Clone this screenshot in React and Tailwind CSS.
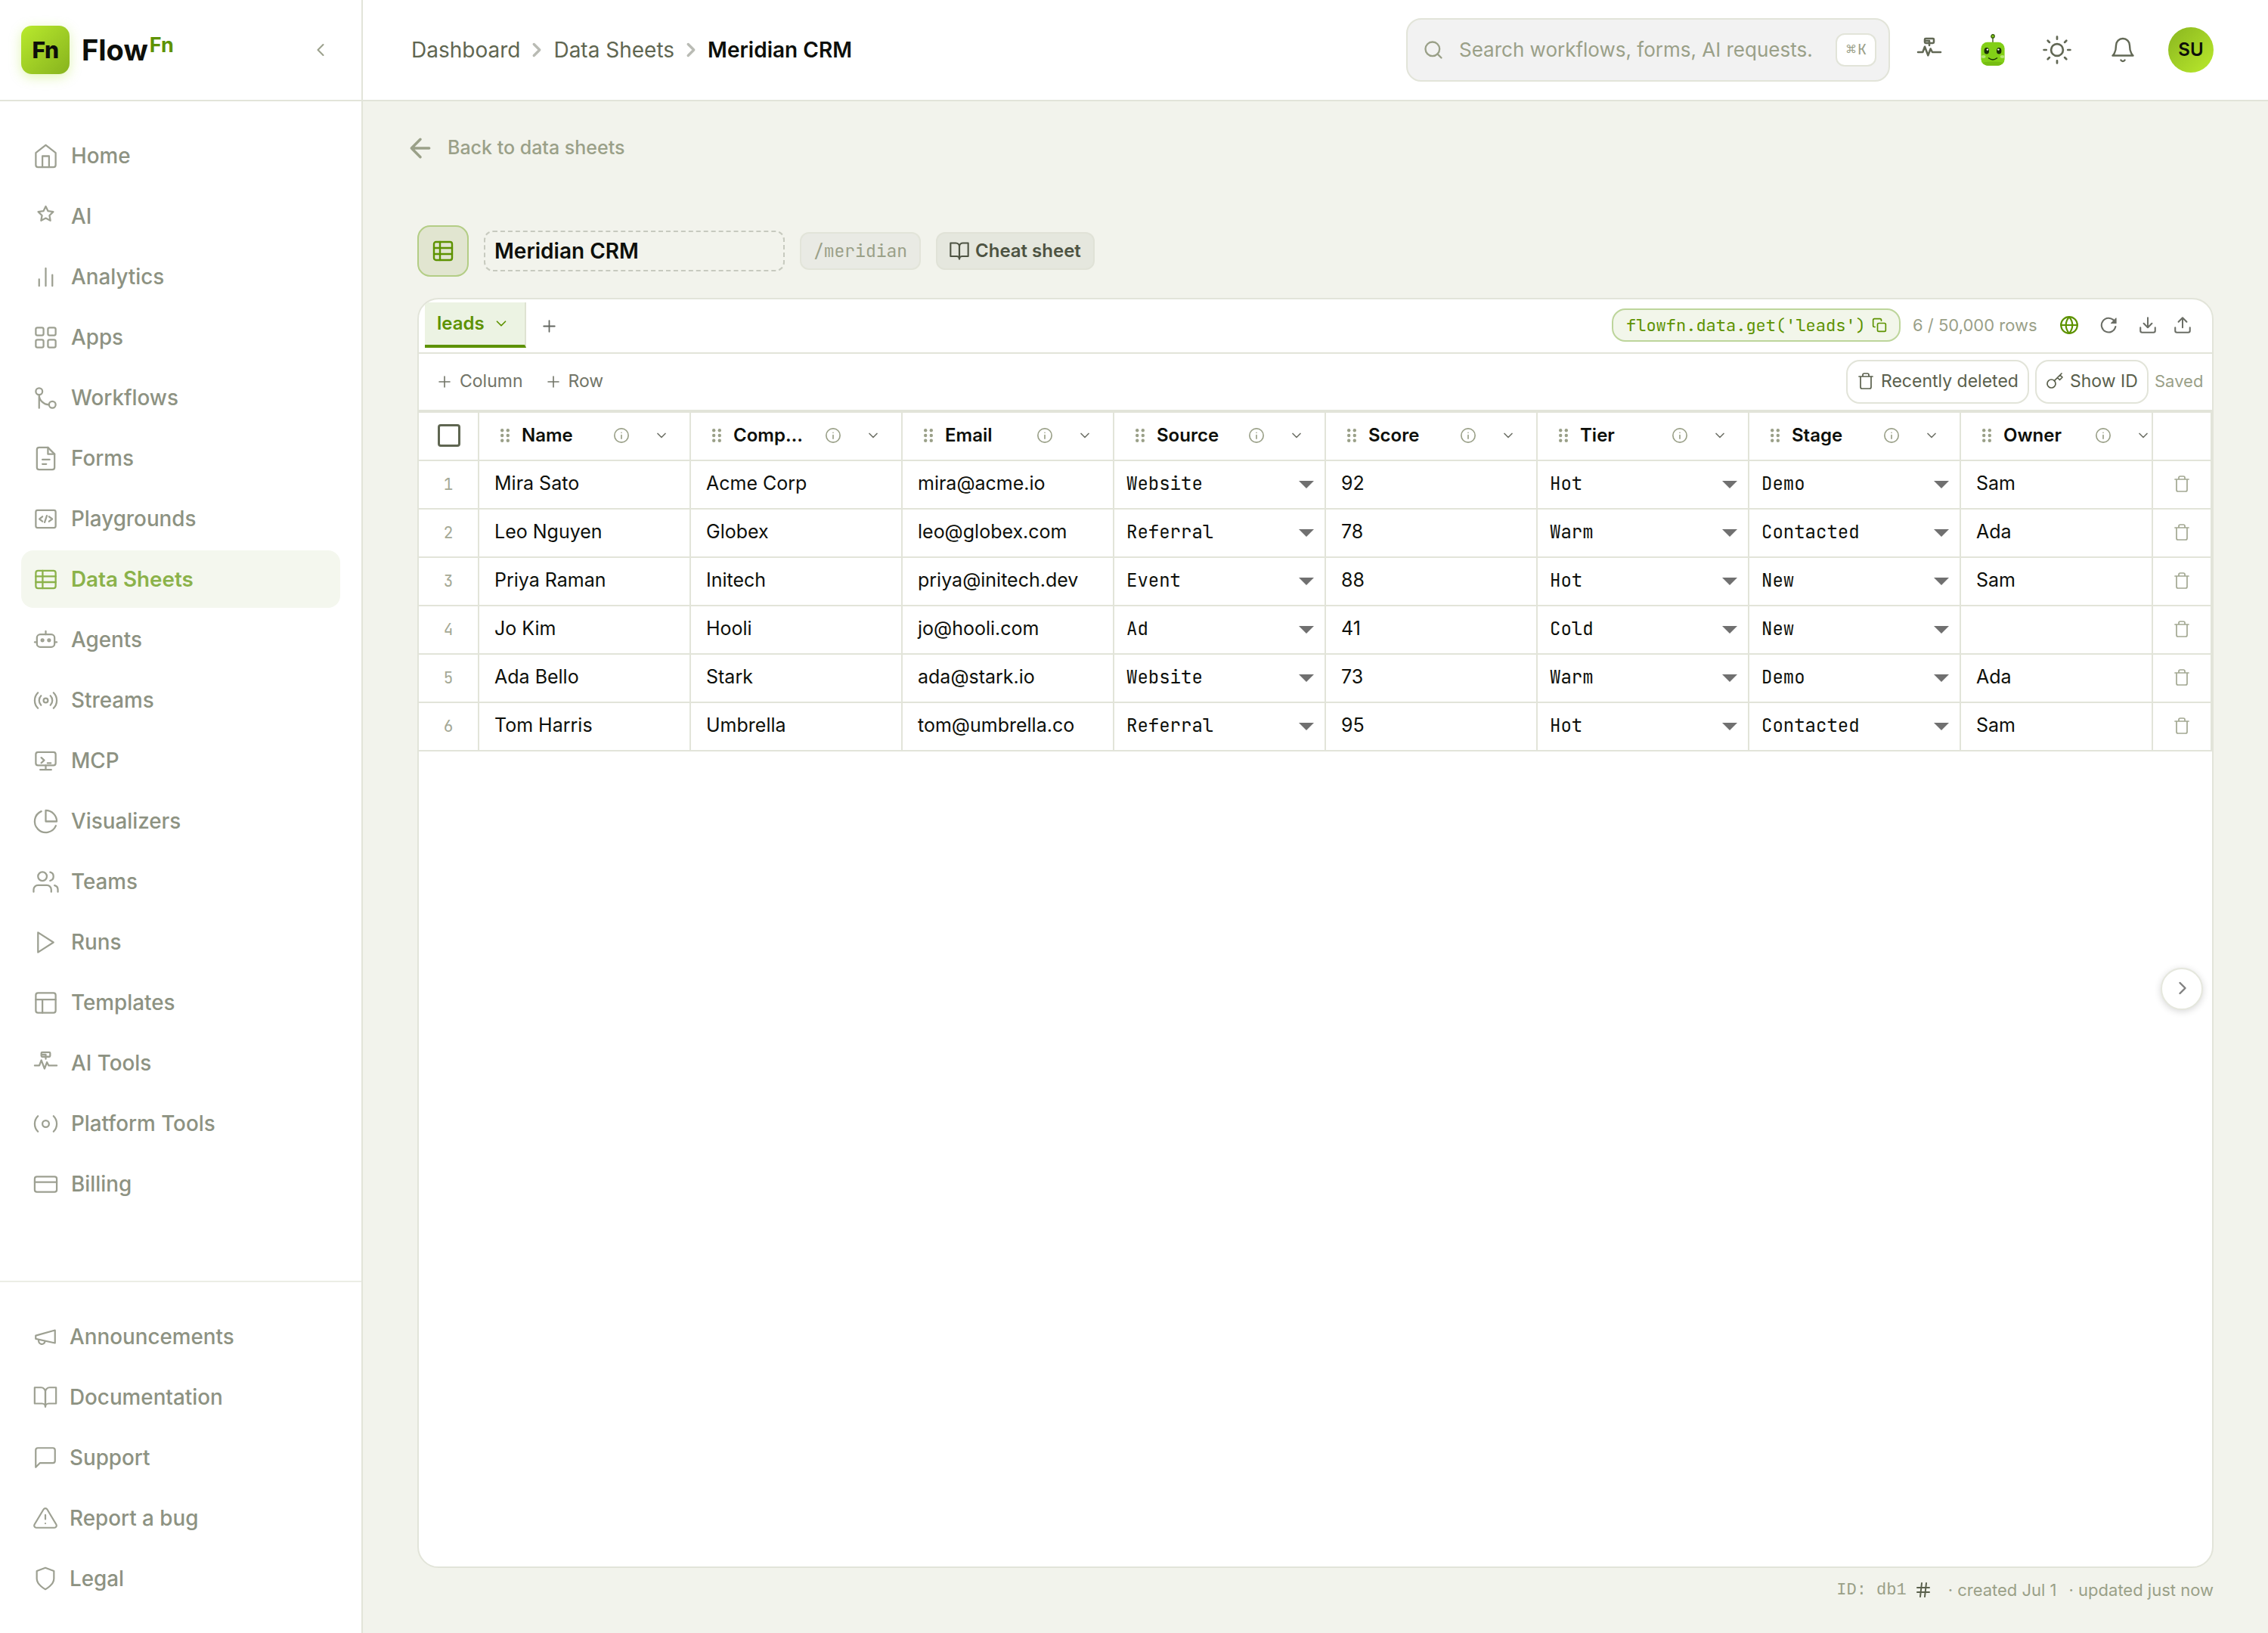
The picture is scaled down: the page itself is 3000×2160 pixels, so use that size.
import React from "react";

/* ---------- icons ---------- */

function Icon({ size = 24, sw = 1.5, className = "", children }) {
  return (
    <svg
      width={size}
      height={size}
      viewBox="0 0 24 24"
      fill="none"
      stroke="currentColor"
      strokeWidth={sw}
      strokeLinecap="round"
      strokeLinejoin="round"
      className={"shrink-0 " + className}
    >
      {children}
    </svg>
  );
}

const g = {
  home: (
    <>
      <path d="M3 9l9-7 9 7v11a2 2 0 0 1-2 2H5a2 2 0 0 1-2-2z" />
      <path d="M9 22V12h6v10" />
    </>
  ),
  ai: (
    <path
      transform="translate(3.84 1.34) scale(0.68)"
      strokeWidth="2.3"
      d="M12 2l3.09 6.26L22 9.27l-5 4.87 1.18 6.88L12 17.77l-6.18 3.25L7 14.14 2 9.27l6.91-1.01z"
    />
  ),
  analytics: <path d="M18 20V10M12 20V4M6 20v-6" />,
  apps: (
    <>
      <rect x="3" y="3" width="7" height="7" rx="1.5" />
      <rect x="14" y="3" width="7" height="7" rx="1.5" />
      <rect x="3" y="14" width="7" height="7" rx="1.5" />
      <rect x="14" y="14" width="7" height="7" rx="1.5" />
    </>
  ),
  workflows: (
    <>
      <circle cx="18" cy="18" r="3" />
      <circle cx="6" cy="6" r="3" />
      <path d="M6 21V9a9 9 0 0 0 9 9" />
    </>
  ),
  forms: (
    <>
      <path d="M14 2H6a2 2 0 0 0-2 2v16a2 2 0 0 0 2 2h12a2 2 0 0 0 2-2V8z" />
      <path d="M14 2v6h6M9 13h6.5M9 17h3.5" />
    </>
  ),
  playgrounds: (
    <>
      <rect x="3" y="4" width="18" height="16" rx="1.6" />
      <path d="M9 9.8L6.3 12 9 14.2M15 9.8l2.9 2.2-2.9 2.2M13 9l-2 6" />
    </>
  ),
  sheets: (
    <>
      <rect x="3" y="4" width="18" height="16" rx="2" />
      <path d="M3 9.2h18M3 14.4h18M9.2 4v16" />
    </>
  ),
  table: (
    <>
      <rect x="3" y="3" width="18" height="18" rx="2" />
      <path d="M3 9h18M3 15h18M9 3v18" />
    </>
  ),
  agents: (
    <>
      <rect x="4" y="7" width="16" height="11.4" rx="3" />
      <circle cx="9" cy="12.2" r="1" />
      <circle cx="15" cy="12.2" r="1" />
      <path d="M12 4v3M2 14h2M20 14h2" />
    </>
  ),
  streams: (
    <>
      <circle cx="12" cy="12" r="2" />
      <path d="M16.24 7.76a6 6 0 0 1 0 8.49m-8.48-.01a6 6 0 0 1 0-8.49m11.31-2.82a10 10 0 0 1 0 14.14m-14.14 0a10 10 0 0 1 0-14.14" />
    </>
  ),
  mcp: (
    <>
      <rect x="3" y="4" width="18" height="12" rx="2" />
      <path d="M12 16v4M7 20h10M8 9l2.6 2.4L8 13.8M13.6 14h3" />
    </>
  ),
  visualizers: (
    <>
      <path d="M21.21 15.89A10 10 0 1 1 8 2.83" />
      <path d="M22 12A10 10 0 0 0 12 2v10z" />
    </>
  ),
  teams: (
    <>
      <path d="M17 21v-2a4 4 0 0 0-4-4H5a4 4 0 0 0-4 4v2" />
      <circle cx="9" cy="7" r="4" />
      <path d="M23 21v-2a4 4 0 0 0-3-3.87M16 3.13a4 4 0 0 1 0 7.75" />
    </>
  ),
  runs: <path d="M5 3l14 9-14 9z" />,
  templates: (
    <>
      <rect x="3" y="3" width="18" height="18" rx="2" />
      <path d="M3 9h18M9 21V9" />
    </>
  ),
  aitools: (
    <>
      <rect x="8" y="2" width="8" height="4" rx="0.8" />
      <path d="M8.3 4H12M12 4v4M2 14h4.2L8 9.2l2.9 7.6L13.1 11l1.6 3H22" />
    </>
  ),
  platform: (
    <>
      <circle cx="12" cy="12" r="3" />
      <path d="M19.07 4.93a10 10 0 0 1 0 14.14m-14.14 0a10 10 0 0 1 0-14.14" />
    </>
  ),
  billing: (
    <>
      <rect x="2" y="5" width="20" height="14" rx="2" />
      <path d="M2 10h20" />
    </>
  ),
  megaphone: (
    <>
      <path d="M3 11l18-5v12L3 14z" />
      <path d="M11.6 16.8a3 3 0 1 1-5.8-1.6" />
    </>
  ),
  book: (
    <>
      <path d="M2 3h6a4 4 0 0 1 4 4v14a3 3 0 0 0-3-3H2z" />
      <path d="M22 3h-6a4 4 0 0 0-4 4v14a3 3 0 0 1 3-3h7z" />
    </>
  ),
  message: <path d="M21 15a2 2 0 0 1-2 2H7l-4 4V5a2 2 0 0 1 2-2h14a2 2 0 0 1 2 2z" />,
  alert: (
    <>
      <path d="M10.29 3.86L1.82 18a2 2 0 0 0 1.71 3h16.94a2 2 0 0 0 1.71-3L13.71 3.86a2 2 0 0 0-3.42 0z" />
      <path d="M12 9v4M12 17h.01" />
    </>
  ),
  shield: <path d="M12 22s8-4 8-10V5l-8-3-8 3v7c0 6 8 10 8 10z" />,
  chevronLeft: <path d="M15 18l-6-6 6-6" />,
  chevronRight: <path d="M9 18l6-6-6-6" />,
  chevronDown: <path d="M6 9l6 6 6-6" />,
  plus: <path d="M12 5v14M5 12h14" />,
  arrowLeft: <path d="M19 12H5M12 19l-7-7 7-7" />,
  search: (
    <>
      <circle cx="11" cy="11" r="8" />
      <path d="M21 21l-4.35-4.35" />
    </>
  ),
  sun: (
    <>
      <circle cx="12" cy="12" r="5" />
      <path d="M12 1v2M12 21v2M4.22 4.22l1.42 1.42M18.36 18.36l1.42 1.42M1 12h2M21 12h2M4.22 19.78l1.42-1.42M18.36 5.64l1.42-1.42" />
    </>
  ),
  bell: (
    <>
      <path d="M18 8A6 6 0 0 0 6 8c0 7-3 9-3 9h18s-3-2-3-9" />
      <path d="M13.73 21a2 2 0 0 1-3.46 0" />
    </>
  ),
  copy: (
    <>
      <rect x="9" y="9" width="13" height="13" rx="2" />
      <path d="M5 15H4a2 2 0 0 1-2-2V4a2 2 0 0 1 2-2h9a2 2 0 0 1 2 2v1" />
    </>
  ),
  globe: (
    <>
      <circle cx="12" cy="12" r="10" />
      <path d="M2 12h20M12 2a15.3 15.3 0 0 1 4 10 15.3 15.3 0 0 1-4 10 15.3 15.3 0 0 1-4-10 15.3 15.3 0 0 1 4-10z" />
    </>
  ),
  refresh: (
    <>
      <path d="M20.5 13.5A9 9 0 1 1 18.4 5.6L20 7.2" />
      <path d="M21.2 2.8v6.4h-6.4z" fill="currentColor" strokeWidth="1" />
    </>
  ),
  download: <path d="M21 15v4a2 2 0 0 1-2 2H5a2 2 0 0 1-2-2v-4M7 10l5 5 5-5M12 15V3" />,
  upload: <path d="M21 15v4a2 2 0 0 1-2 2H5a2 2 0 0 1-2-2v-4M17 8l-5-5-5 5M12 3v12" />,
  trash: <path d="M3 6h18M19 6v14a2 2 0 0 1-2 2H7a2 2 0 0 1-2-2V6M8 6V4a2 2 0 0 1 2-2h4a2 2 0 0 1 2 2v2" />,
  key: (
    <>
      <circle cx="7.5" cy="15.5" r="5.5" />
      <path d="M21 2l-9.6 9.6M15.5 7.5l3 3L22 7l-3-3" />
    </>
  ),
  info: (
    <>
      <circle cx="12" cy="12" r="10" />
      <path d="M12 16.5V11.5M12 8h.01" />
    </>
  ),
  hash: <path d="M4 9h16M4 15h16M10 3L8 21M16 3l-2 18" />,
};

function Grip() {
  return (
    <svg width="12" height="18" viewBox="0 0 12 18" className="shrink-0" fill="#9aa088">
      {[2.2, 9, 15.8].map((y) => (
        <React.Fragment key={y}>
          <circle cx="2.2" cy={y} r="2.2" />
          <circle cx="9.8" cy={y} r="2.2" />
        </React.Fragment>
      ))}
    </svg>
  );
}

function Robot() {
  return (
    <svg width="32" height="42" viewBox="0 0 32 42" className="shrink-0">
      <path d="M16 4v8" stroke="#3f5a1a" strokeWidth="1.4" />
      <circle cx="16" cy="2.9" r="2.2" fill="#84cc16" stroke="#2f5208" strokeWidth="1.2" />
      <rect x="0.4" y="10.8" width="31.2" height="31" rx="8.5" fill="#82cf17" />
      <path d="M3 37.6q13 -2.4 26 0q-2 4.2-6.5 4.2H9.5Q5 41.8 3 37.6z" fill="#76bd12" />
      <ellipse cx="3.6" cy="30" rx="2.9" ry="1.9" fill="#b6e774" />
      <ellipse cx="28.6" cy="30" rx="2.9" ry="1.9" fill="#b6e774" />
      <ellipse cx="7.8" cy="22.2" rx="3.2" ry="4.3" fill="#1a2e05" />
      <ellipse cx="24.2" cy="22.2" rx="3.2" ry="4.3" fill="#1a2e05" />
      <circle cx="8.9" cy="20.6" r="1.2" fill="#fff" />
      <circle cx="23.4" cy="20.6" r="1.2" fill="#fff" />
      <path d="M10.4 31.8q5.6 4.4 11.2 0" fill="none" stroke="#1a2e05" strokeWidth="1.3" strokeLinecap="round" />
    </svg>
  );
}

/* ---------- data ---------- */

const NAV = [
  ["Home", g.home],
  ["AI", g.ai],
  ["Analytics", g.analytics],
  ["Apps", g.apps],
  ["Workflows", g.workflows],
  ["Forms", g.forms],
  ["Playgrounds", g.playgrounds],
  ["Data Sheets", g.sheets],
  ["Agents", g.agents],
  ["Streams", g.streams],
  ["MCP", g.mcp],
  ["Visualizers", g.visualizers],
  ["Teams", g.teams],
  ["Runs", g.runs],
  ["Templates", g.templates],
  ["AI Tools", g.aitools],
  ["Platform Tools", g.platform],
  ["Billing", g.billing],
];

const FOOT = [
  ["Announcements", g.megaphone],
  ["Documentation", g.book],
  ["Support", g.message],
  ["Report a bug", g.alert],
  ["Legal", g.shield],
];

const COLUMNS = ["Name", "Comp…", "Email", "Source", "Score", "Tier", "Stage", "Owner"];
const SELECTS = [3, 5, 6];
const ROWS = [
  ["Mira Sato", "Acme Corp", "mira@acme.io", "Website", "92", "Hot", "Demo", "Sam"],
  ["Leo Nguyen", "Globex", "leo@globex.com", "Referral", "78", "Warm", "Contacted", "Ada"],
  ["Priya Raman", "Initech", "priya@initech.dev", "Event", "88", "Hot", "New", "Sam"],
  ["Jo Kim", "Hooli", "jo@hooli.com", "Ad", "41", "Cold", "New", ""],
  ["Ada Bello", "Stark", "ada@stark.io", "Website", "73", "Warm", "Demo", "Ada"],
  ["Tom Harris", "Umbrella", "tom@umbrella.co", "Referral", "95", "Hot", "Contacted", "Sam"],
];

const MONO = "font-['JetBrains_Mono','DejaVu_Sans_Mono',monospace]";
const GRID = "grid grid-cols-[80px_repeat(7,280px)_254px_78px]";

/* ---------- sections ---------- */

function Sidebar() {
  return (
    <aside className="flex h-full w-[480px] shrink-0 flex-col border-r-2 border-[#e2e4d9] bg-white">
      <div className="flex h-[134px] shrink-0 items-center border-b-2 border-[#e2e4d9] pl-[28px] pr-[40px]">
        <div className="flex h-[64px] w-[64px] items-center justify-center rounded-[14px] bg-linear-to-br from-[#b9ea2d] to-[#87b31e] text-[30px] font-extrabold tracking-[-0.5px] text-[#0d0f0a] shadow-[0_4px_16px_rgba(170,225,40,0.35)]">
          Fn
        </div>
        <div className="ml-[16px] flex items-start leading-none text-[#0d0f0a]">
          <span className="text-[38px] font-bold leading-[46px]">Flow</span>
          <span className="ml-[2px] text-[27px] font-bold leading-[34px] text-[#5d9200]">Fn</span>
        </div>
        <Icon size={28} sw={1.8} className="ml-auto text-[#9ba08c]">
          {g.chevronLeft}
        </Icon>
      </div>

      <nav className="flex flex-col gap-1 px-[28px] pt-[34px]">
        {NAV.map(([label, icon]) => {
          const active = label === "Data Sheets";
          return (
            <div
              key={label}
              className={
                "flex h-[76px] w-[422px] items-center gap-[16px] rounded-[16px] pl-[15px] text-[27.8px] " +
                (active ? "bg-[#f4f7ee] font-semibold text-[#8bb24a]" : "font-medium text-[#8d9282]")
              }
            >
              <Icon
                size={35}
                sw={1.55}
                className={"mt-px " + (active ? "text-[#8bb24a]" : "text-[#9da092]")}
              >
                {icon}
              </Icon>
              <span className="pt-[2px]">{label}</span>
            </div>
          );
        })}
      </nav>

      <div className="mt-auto flex flex-col gap-1 border-t-2 border-[#ecede5] px-[28px] pb-[34px] pt-[34px]">
        {FOOT.map(([label, icon]) => (
          <div
            key={label}
            className="flex h-[76px] items-center gap-[15px] pl-[15px] text-[27.8px] font-medium text-[#8d9282]"
          >
            <Icon size={34} sw={1.55} className="text-[#9da092]">
              {icon}
            </Icon>
            <span className="pt-[2px]">{label}</span>
          </div>
        ))}
      </div>
    </aside>
  );
}

function Header() {
  return (
    <header className="flex h-[134px] shrink-0 items-center border-b-2 border-[#e2e4d9] bg-white pl-[64px] pr-[72px]">
      <div className="flex items-center gap-[7px] text-[28px] text-[#5f6651]">
        <span>Dashboard</span>
        <Icon size={30} sw={2.7} className="text-[#b9bbb4]">
          {g.chevronRight}
        </Icon>
        <span>Data Sheets</span>
        <Icon size={30} sw={2.7} className="text-[#b9bbb4]">
          {g.chevronRight}
        </Icon>
        <span className="font-semibold text-[#0d0f0a]">Meridian CRM</span>
      </div>

      <div className="ml-auto mr-4 flex h-[84px] w-[640px] items-center rounded-[20px] border-2 border-[#e2e4d9] bg-[#f2f2f2] pl-[20px] pr-[16px]">
        <Icon size={28} sw={2} className="text-[#9aa088]">
          {g.search}
        </Icon>
        <span className="ml-[20px] pb-[2px] text-[26px] text-[#9aa088]">Search workflows, forms, AI requests.</span>
        <span className="ml-auto flex h-[44px] w-[54px] items-center justify-center gap-px rounded-[12px] border-2 border-[#e2e4d9] bg-white pb-[2px] text-[20px] text-[#9aa088]">
          <span className="text-[15px]">⌘</span>
          <span className={MONO}>K</span>
        </span>
      </div>

      <div className="flex items-center text-[#626855]">
        <div className="mr-[12px] flex w-[72px] justify-center">
          <Icon size={36} sw={1.7}>
            {g.aitools}
          </Icon>
        </div>
        <div className="mr-[13px] flex w-[72px] justify-center">
          <Robot />
        </div>
        <div className="mr-[15px] flex w-[72px] justify-center">
          <Icon size={38} sw={1.7}>
            {g.sun}
          </Icon>
        </div>
        <div className="mr-[24px] flex w-[72px] justify-center">
          <Icon size={36} sw={1.6}>
            {g.bell}
          </Icon>
        </div>
        <div className="flex h-[60px] w-[60px] items-center justify-center rounded-full bg-linear-to-br from-[#8ab620] to-[#baea2c] text-[24px] font-semibold text-[#0d0f0a]">
          SU
        </div>
      </div>
    </header>
  );
}

function TitleRow() {
  return (
    <div className="flex h-[68px] items-center">
      <div className="flex h-[68px] w-[68px] items-center justify-center rounded-[17px] border-2 border-[#b3cd85] bg-[#e1e5d0] text-[#5d9200]">
        <Icon size={32} sw={1.8}>
          {g.table}
        </Icon>
      </div>
      <div className="ml-[20px] flex h-[54px] w-[398px] items-center rounded-[12px] border-2 border-dashed border-[#c7cabf] pl-[12px] text-[28px] font-semibold text-[#0d0f0a]">
        Meridian CRM
      </div>
      <div
        className={
          "ml-[20px] flex h-[50px] w-[160px] items-center justify-center rounded-[12px] border-2 border-[#e2e4d9] bg-[#e9eae4] text-[23px] text-[#9aa088] " +
          MONO
        }
      >
        /meridian
      </div>
      <div className="ml-[20px] flex h-[50px] w-[210px] items-center rounded-[12px] border-2 border-[#e0e2d7] bg-[#e5e7de] pl-[15px] text-[24px] font-semibold text-[#4d5342]">
        <Icon size={28} sw={1.8} className="mr-[7px]">
          {g.book}
        </Icon>
        Cheat sheet
      </div>
    </div>
  );
}

function TabBar() {
  return (
    <div className="flex h-[72px] shrink-0 items-start border-b-2 border-[#e2e4d9] pl-[8px]">
      <div className="mt-[4px] flex h-[60px] w-[134px] items-center border-b-4 border-r-2 border-b-[#5d9200] border-r-[#dfe3d2] bg-[#ecf3e3] pl-[16px] text-[24px] font-semibold text-[#5d9200]">
        leads
        <Icon size={22} sw={1.9} className="ml-auto mr-[20px]">
          {g.chevronDown}
        </Icon>
      </div>
      <Icon size={25} sw={1.7} className="ml-[18px] mt-[23px] text-[#636660]">
        {g.plus}
      </Icon>
      <div className="ml-auto mt-[12px] flex h-[44px] items-center text-[#6b6e66]">
        <div
          className={
            "flex h-[44px] w-[382px] items-center rounded-[18px] border-2 border-[#bdd59b] bg-[#f2f6ea] pl-[17px] text-[22px] font-normal text-[#5d9200] " +
            MONO
          }
        >
          flowfn.data.get('leads')
          <Icon size={20} sw={2} className="ml-[8px]">
            {g.copy}
          </Icon>
        </div>
        <span className="ml-[16px] w-[166px] whitespace-nowrap text-[22px] text-[#9aa088]">6 / 50,000 rows</span>
        <div className="ml-[27px] flex w-[28px] justify-center text-[#5d9200]">
          <Icon size={26} sw={2}>
            {g.globe}
          </Icon>
        </div>
        <div className="ml-[24px] flex w-[28px] justify-center">
          <Icon size={25} sw={2}>
            {g.refresh}
          </Icon>
        </div>
        <div className="ml-[24px] flex w-[28px] justify-center">
          <Icon size={26} sw={1.9}>
            {g.download}
          </Icon>
        </div>
        <div className="ml-[18px] mr-[25px] flex w-[28px] justify-center">
          <Icon size={26} sw={1.9}>
            {g.upload}
          </Icon>
        </div>
      </div>
    </div>
  );
}

function Toolbar() {
  return (
    <div className="flex h-[78px] shrink-0 items-center border-b-4 border-[#e2e4d9] pl-[22px] pr-[12px] text-[23px] text-[#727568]">
      <Icon size={24} sw={1.6} className="mr-[8px]">
        {g.plus}
      </Icon>
      <span className="pb-[2px]">Column</span>
      <Icon size={24} sw={1.6} className="ml-[28px] mr-[8px]">
        {g.plus}
      </Icon>
      <span className="pb-[2px]">Row</span>
      <div className="ml-auto flex h-[58px] w-[242px] items-center rounded-[18px] border-2 border-[#e2e4d9] pb-[2px] pl-[12px] text-[#5a604c]">
        <Icon size={24} sw={1.7} className="mr-[8px]">
          {g.trash}
        </Icon>
        Recently deleted
      </div>
      <div className="ml-[8px] flex h-[58px] w-[150px] items-center rounded-[18px] border-2 border-[#e2e4d9] pb-[2px] pl-[12px] text-[#5a604c]">
        <Icon size={24} sw={1.7} className="mr-[8px]">
          {g.key}
        </Icon>
        Show ID
      </div>
      <span className="ml-[8px] w-[64px] pb-[2px] text-[22px] text-[#9aa088]">Saved</span>
    </div>
  );
}

function DataTable() {
  const cell = "flex items-center overflow-hidden border-b-2 border-r-2 border-[#e2e4d9]";
  return (
    <div className="text-[25px] text-[#0d0f0a]">
      <div className={GRID + " h-[64px]"}>
        <div className={cell + " justify-center pb-[2px] pl-[2px]"}>
          <span className="h-[30px] w-[30px] rounded-[4px] border-[3px] border-[#5f6651]" />
        </div>
        {COLUMNS.map((name) => (
          <div key={name} className={cell + " pb-[2px] pl-[28px]"}>
            <Grip />
            <span className="ml-[16px] w-[121px] shrink-0 text-[24px] font-semibold">{name}</span>
            <Icon size={22} sw={1.8} className="text-[#9aa088]">
              {g.info}
            </Icon>
            <Icon size={20} sw={2} className="ml-[32px] text-[#6f7268]">
              {g.chevronDown}
            </Icon>
          </div>
        ))}
        <div className={cell} />
      </div>
      {ROWS.map((row, i) => (
        <div key={row[0]} className={GRID + " h-[64px]"}>
          <div className={cell + " justify-center pb-px text-[21px] text-[#a4a895] " + MONO}>{i + 1}</div>
          {row.map((value, j) =>
            SELECTS.includes(j) ? (
              <div key={j} className={cell + " justify-between pb-[3px] pl-[16px] pr-[14px] text-[24px] " + MONO}>
                {value}
                <svg width="20" height="10" viewBox="0 0 20 10" fill="#707070" className="mt-[3px] shrink-0">
                  <path d="M0 0h20L10 10z" />
                </svg>
              </div>
            ) : (
              <div key={j} className={cell + " pb-[3px] pl-[20px]"}>
                {value}
              </div>
            )
          )}
          <div className={cell + " justify-center pb-[2px] text-[#a3a892]"}>
            <Icon size={24} sw={1.7}>
              {g.trash}
            </Icon>
          </div>
        </div>
      ))}
    </div>
  );
}

export default function App() {
  return (
    <div className="flex h-[2160px] w-[3000px] overflow-hidden bg-[#f2f3ec] font-[Inter,'Liberation_Sans',sans-serif] leading-normal">
      <Sidebar />
      <div className="flex min-w-0 flex-1 flex-col">
        <Header />
        <main className="flex flex-1 flex-col pl-[72px] pr-[72px]">
          <div className="-ml-[16px] mt-[42px] flex h-[40px] items-center text-[25px] font-medium text-[#9aa088]">
            <Icon size={40} sw={2.1} className="mr-[16px]">
              {g.arrowLeft}
            </Icon>
            Back to data sheets
          </div>
          <div className="mt-[82px]">
            <TitleRow />
          </div>
          <section className="relative mt-[28px] flex h-[1680px] w-[2376px] flex-col overflow-hidden rounded-[28px] border-2 border-[#e2e4d9] bg-white">
            <TabBar />
            <Toolbar />
            <DataTable />
            <button className="absolute right-[12px] top-[884px] flex h-[56px] w-[56px] items-center justify-center rounded-full border-2 border-[#e5e7dd] bg-white pb-[2px] pl-[2px] text-[#808080] shadow-[0_2px_10px_rgba(0,0,0,0.16)]">
              <Icon size={28} sw={2.1}>
                {g.chevronRight}
              </Icon>
            </button>
          </section>
          <footer className="mt-[12px] flex h-[34px] items-center justify-end text-[22px] text-[#9aa088]">
            <span className="whitespace-pre font-['Liberation_Mono',monospace]">ID: db1</span>
            <Icon size={24} sw={2} className="ml-[10px] mr-[21px] text-[#5a604c]">
              {g.hash}
            </Icon>
            <span className="mr-[16px]">· created Jul 1</span>
            <span>· updated just now</span>
          </footer>
        </main>
      </div>
    </div>
  );
}
